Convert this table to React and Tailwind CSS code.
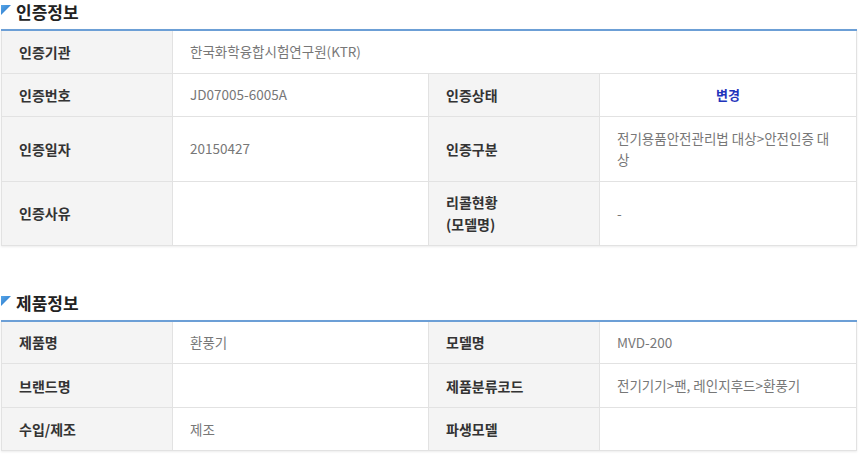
import React from "react";

const font = { fontFamily: '"Noto Sans CJK KR", "Noto Sans", sans-serif' };

const Title = ({ children }) => (
  <div className="h-[29px] flex items-start pt-[1px]">
    <svg width="10" height="10" viewBox="0 0 10 10" className="mt-[4px] ml-[1px] mr-[5px]">
      <defs>
        <linearGradient id="tri" x1="0" y1="0" x2="1" y2="1">
          <stop offset="0" stopColor="#5aa7e8" />
          <stop offset="1" stopColor="#1e6fc6" />
        </linearGradient>
      </defs>
      <polygon points="0,0 10,0 0,10" fill="url(#tri)" />
    </svg>
    <h2 className="text-[17px] leading-[22px] font-semibold text-[#222]">{children}</h2>
  </div>
);

const Th = ({ children, h }) => (
  <th className={`${h} bg-[#f4f4f4] border border-[#e2e2e2] text-left align-middle pl-[17px] pr-2 text-[14px] leading-[22px] font-bold text-[#333]`}>
    {children}
  </th>
);

const Td = ({ children, className = "", colSpan }) => (
  <td colSpan={colSpan} className={`bg-white border border-[#e2e2e2] align-middle pl-[17px] pr-5 text-[13.5px] leading-[21px] text-[#777] break-all ${className}`}>
    {children}
  </td>
);

const Cols = () => (
  <colgroup>
    <col className="w-[171px]" />
    <col className="w-[256px]" />
    <col className="w-[171px]" />
    <col className="w-[257px]" />
  </colgroup>
);

const tableCls =
  "w-[855px] ml-px border-collapse border-t-2 border-t-[#6c9fd6] shadow-[0_1px_2px_rgba(0,0,0,0.08)] table-fixed";

export default function App() {
  return (
    <div className="w-[860px] h-[466px] bg-white overflow-hidden" style={font}>
      <section>
        <Title>인증정보</Title>
        <table className={tableCls}>
          <Cols />
          <tbody>
            <tr>
              <Th h="h-[43px]">인증기관</Th>
              <Td colSpan={3}>한국화학융합시험연구원(KTR)</Td>
            </tr>
            <tr>
              <Th h="h-[43px]">인증번호</Th>
              <Td>JD07005-6005A</Td>
              <Th h="h-[43px]">인증상태</Th>
              <Td className="!pl-0 !pr-0 text-center !text-[#2233bb] font-bold !text-[13px]">변경</Td>
            </tr>
            <tr>
              <Th h="h-[65px]">인증일자</Th>
              <Td>20150427</Td>
              <Th h="h-[65px]">인증구분</Th>
              <Td>전기용품안전관리법 대상&gt;안전인증 대상</Td>
            </tr>
            <tr>
              <Th h="h-[64px]">인증사유</Th>
              <Td></Td>
              <Th h="h-[64px]">
                리콜현황
                <br />
                (모델명)
              </Th>
              <Td>-</Td>
            </tr>
          </tbody>
        </table>
      </section>

      <section className="mt-[45px]">
        <Title>제품정보</Title>
        <table className={tableCls}>
          <Cols />
          <tbody>
            <tr>
              <Th h="h-[43px]">제품명</Th>
              <Td>환풍기</Td>
              <Th h="h-[43px]">모델명</Th>
              <Td>MVD-200</Td>
            </tr>
            <tr>
              <Th h="h-[44px]">브랜드명</Th>
              <Td></Td>
              <Th h="h-[44px]">제품분류코드</Th>
              <Td>전기기기&gt;팬, 레인지후드&gt;환풍기</Td>
            </tr>
            <tr>
              <Th h="h-[43px]">수입/제조</Th>
              <Td>제조</Td>
              <Th h="h-[43px]">파생모델</Th>
              <Td></Td>
            </tr>
          </tbody>
        </table>
      </section>
    </div>
  );
}
